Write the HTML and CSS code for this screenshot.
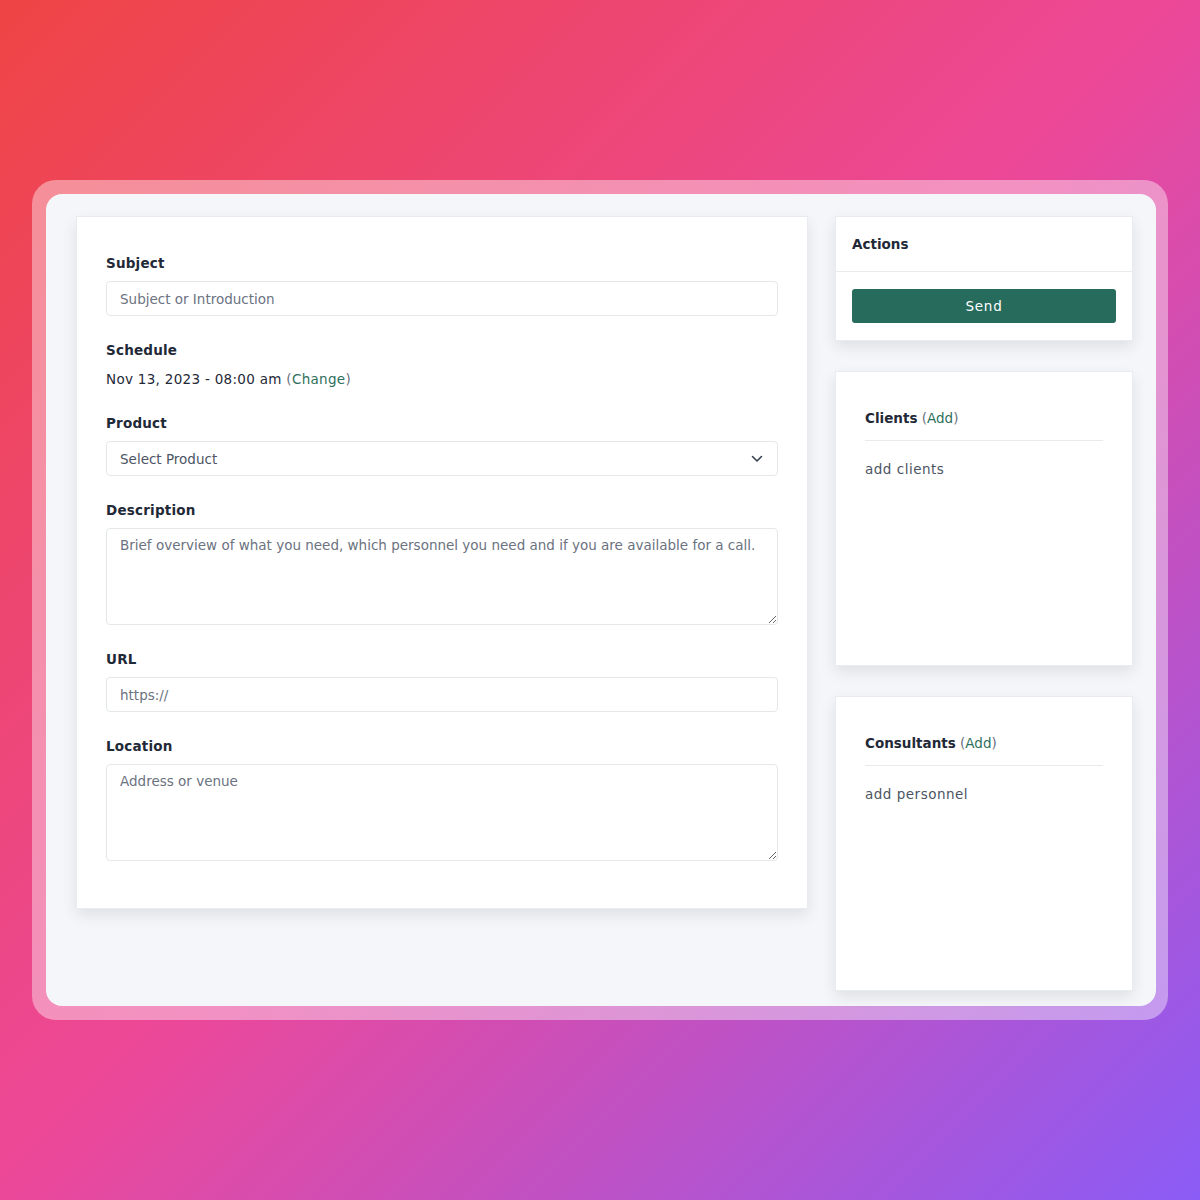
FILE: index.html
```html
<!DOCTYPE html>
<html>
<head>
<meta charset="utf-8">
<link rel="stylesheet" href="styles.css">
</head>
<body>
<div class="frame">
  <div class="window">
    <div class="main card">
      <div class="group">
        <label class="label">Subject</label>
        <input class="input" type="text" placeholder="Subject or Introduction">
      </div>
      <div class="group">
        <div class="label">Schedule</div>
        <div class="date">Nov 13, 2023 - 08:00 am <span class="paren">(</span><a class="link">Change</a><span class="paren">)</span></div>
      </div>
      <div class="group">
        <label class="label">Product</label>
        <div class="select">
          <span>Select Product</span>
          <svg width="12" height="8" viewBox="0 0 12 8"><path d="M1.5 1.5 L6 6 L10.5 1.5" fill="none" stroke="#374151" stroke-width="1.6" stroke-linecap="round" stroke-linejoin="round"/></svg>
        </div>
      </div>
      <div class="group">
        <label class="label">Description</label>
        <textarea class="textarea" placeholder="Brief overview of what you need, which personnel you need and if you are available for a call."></textarea>
      </div>
      <div class="group">
        <label class="label">URL</label>
        <input class="input" type="text" placeholder="https://">
      </div>
      <div class="group">
        <label class="label">Location</label>
        <textarea class="textarea" placeholder="Address or venue"></textarea>
      </div>
    </div>
    <div class="side">
      <div class="card actions">
        <div class="actions-head">Actions</div>
        <div class="actions-body"><button class="send">Send</button></div>
      </div>
      <div class="card people">
        <div class="people-title"><b>Clients</b> <span class="paren">(</span><a class="link">Add</a><span class="paren">)</span></div>
        <div class="people-empty">add clients</div>
      </div>
      <div class="card people">
        <div class="people-title"><b>Consultants</b> <span class="paren">(</span><a class="link">Add</a><span class="paren">)</span></div>
        <div class="people-empty">add personnel</div>
      </div>
    </div>
  </div>
</div>
</body>
</html>
```
FILE: styles.css
```css
* { box-sizing: border-box; }
html, body { margin: 0; padding: 0; }
body {
  width: 1200px;
  height: 1200px;
  background: linear-gradient(135deg, #ef4444 0%, #ec4899 50%, #8b5cf6 100%);
  font-family: "DejaVu Sans", "Open Sans", sans-serif;
  color: #1f2937;
  padding: 180px 32px 0 32px;
}
.frame {
  height: 840px;
  border-radius: 24px;
  background: rgba(255, 255, 255, 0.4);
  padding: 14px 12px 14px 14px;
}
.window {
  height: 812px;
  border-radius: 16px;
  background: #f4f6f9;
  padding: 22px 23px 16px 30px;
  display: flex;
  align-items: flex-start;
  gap: 27px;
}
.card {
  background: #fff;
  border: 1px solid #e8ebef;
  box-shadow: 0 6px 14px rgba(0, 0, 0, 0.09);
}
.main {
  width: 732px;
  padding: 36px 29px 24px 29px;
}
.group { margin-bottom: 24px; }
.group:last-child { margin-bottom: 0; }
.main .group:last-child { margin-bottom: 23px; }
.label {
  display: block;
  font-size: 13.5px;
  font-weight: 700;
  line-height: 20px;
  margin-bottom: 8px;
  color: #1f2937;
  letter-spacing: 0.2px;
}
.input, .select, .textarea {
  display: block;
  width: 100%;
  border: 1px solid #e4e8eb;
  border-radius: 4px;
  background: #fff;
  font-family: inherit;
  font-size: 13.5px;
  color: #374151;
  outline: none;
}
.input { height: 35px; padding: 0 13px; }
.input::placeholder, .textarea::placeholder { color: #6b7280; }
.select {
  height: 35px;
  padding: 0 14px 0 13px;
  display: flex;
  align-items: center;
  justify-content: space-between;
  color: #4b5563;
}
.textarea {
  height: 97px;
  padding: 7px 13px;
  resize: vertical;
  line-height: 18px;
}
.date {
  font-size: 13.5px;
  letter-spacing: 0.3px;
  line-height: 20px;
  color: #1f2937;
  margin-top: 9px;
}
.link { color: #2f6f5d; text-decoration: none; }
.paren { color: #6b7280; }
.side {
  width: 298px;
  display: flex;
  flex-direction: column;
  gap: 30px;
}
.actions-head {
  height: 55px;
  padding: 0 16px;
  display: flex;
  align-items: center;
  font-size: 13.5px;
  font-weight: 700;
  border-bottom: 1px solid #e8ecef;
}
.actions-body { padding: 17px 16px 17px 16px; }
.send {
  display: block;
  width: 100%;
  height: 34px;
  border: none;
  border-radius: 3px;
  background: #276b5d;
  color: #fff;
  font-family: inherit;
  font-size: 13.5px;
  font-weight: 400;
  letter-spacing: 0.8px;
}
.people {
  height: 295px;
  padding: 36px 29px 0 29px;
}
.people-title {
  font-size: 13.5px;
  line-height: 20px;
  padding-bottom: 12px;
  border-bottom: 1px solid #e8ecef;
}
.people-title b { font-weight: 700; color: #1f2937; }
.people-empty {
  margin-top: 18px;
  font-size: 13.5px;
  letter-spacing: 0.5px;
  line-height: 20px;
  color: #4b5563;
}
```
